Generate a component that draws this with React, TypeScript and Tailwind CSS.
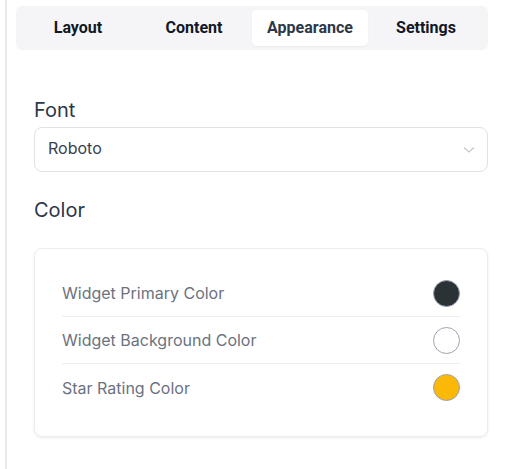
import React from "react";

const tabs = ["Layout", "Content", "Appearance", "Settings"];
const colors = [
  { label: "Widget Primary Color", fill: "bg-[#2a3236]" },
  { label: "Widget Background Color", fill: "bg-white" },
  { label: "Star Rating Color", fill: "bg-[#fbb806]" },
];

export default function App() {
  return (
    <div className="w-[513px] h-[469px] bg-white pl-[5px] overflow-hidden">
      <div className="h-full border-l-2 border-[#e8e8ee] pl-[9px] pr-[25px] pt-[6px]">
        <div className="grid grid-cols-4 h-[44px] p-1 rounded-md bg-[#f5f5f7]" style={{ fontFamily: "Roboto, sans-serif" }}>
          {tabs.map((t) => (
            <div
              key={t}
              className={
                "flex items-center justify-center rounded-[5px] text-[16px] font-bold " +
                (t === "Appearance" ? "bg-white text-[#2d3748] shadow-[0_1px_2px_rgba(0,0,0,0.04)]" : "text-[#111827]")
              }
            >
              {t}
            </div>
          ))}
        </div>
        <div className="pl-[18px]" style={{ fontFamily: "Inter, sans-serif" }}>
          <div className="mt-[46px] text-[20px] leading-[28px] text-[#2d3748]">Font</div>
          <div className="mt-[3px] h-[45px] rounded-lg border border-[#e2e2e6] flex items-center justify-between pl-[13px] pr-[12px]">
            <span className="text-[16px] text-[#374151] -mt-[3px]">Roboto</span>
            <svg width="12" height="8" viewBox="0 0 12 8" fill="none">
              <path d="M1 1.5 L6 6 L11 1.5" stroke="#c4c4c8" strokeWidth="1.2" />
            </svg>
          </div>
          <div className="mt-[24px] text-[20px] leading-[28px] text-[#2d3748]">Color</div>
          <div className="mt-[24px] rounded-lg border border-[#ececef] shadow-[0_1px_3px_rgba(0,0,0,0.08)] px-[27px] pt-[21px] pb-[25px]">
            {colors.map((c, i) => (
              <div
                key={c.label}
                className={
                  "flex items-center justify-between h-[47px] " + (i < colors.length - 1 ? "border-b border-[#eeeef0]" : "")
                }
              >
                <span className="text-[16px] text-[#6b7280]">{c.label}</span>
                <span className={"w-[27px] h-[27px] rounded-full border border-[#9ca3af] " + c.fill} />
              </div>
            ))}
          </div>
        </div>
      </div>
    </div>
  );
}
